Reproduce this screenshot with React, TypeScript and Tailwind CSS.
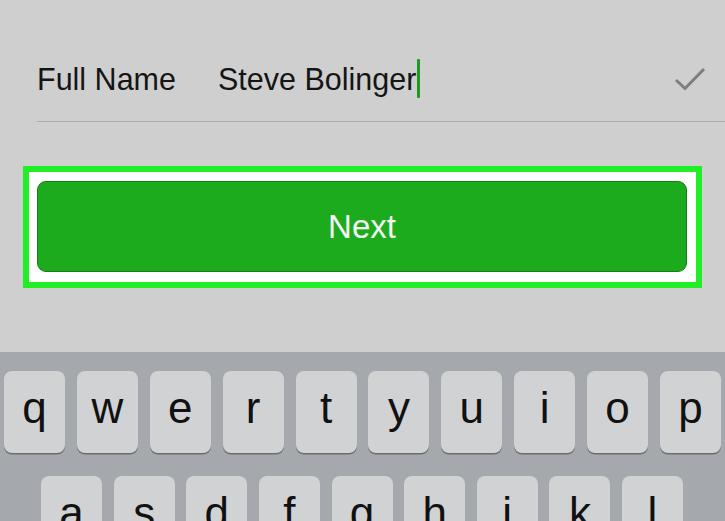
const rowOne = ['q', 'w', 'e', 'r', 't', 'y', 'u', 'i', 'o', 'p'];
const rowTwo = ['a', 's', 'd', 'f', 'g', 'h', 'j', 'k', 'l'];

const Key = ({ letter }: { letter: string }) => (
  <div className="w-[61px] h-[82px] shrink-0 rounded-[8px] bg-[#d1d2d4] shadow-[0_1.5px_0_#6c6d70] flex justify-center pt-[15px] text-[44px] leading-[44px] text-[#111]">
    {letter}
  </div>
);

const App: React.FC = () => {
  return (
    <div className="w-[725px] h-[521px] overflow-hidden flex flex-col font-['Liberation_Sans',Arial,sans-serif]">
      <div className="h-[352px] shrink-0 bg-[#cfcfcf] flex flex-col">
        <div className="ml-[37px] h-[122px] pt-[36px] border-b border-[#acacac] flex items-center text-[30.5px] leading-[30px] text-[#151515]">
          <span className="w-[181px]">Full Name</span>
          <span>Steve Bolinger</span>
          <span className="w-[3px] h-[39px] bg-[#1e9a1e] ml-[1px] rounded-[1px]" />
          <svg
            className="ml-auto mr-[19px]"
            width="32"
            height="24"
            viewBox="0 0 32 24"
            fill="none"
          >
            <polyline
              points="2,13 11,21.5 30,2"
              stroke="#7e7e7e"
              strokeWidth="3"
              strokeLinejoin="miter"
            />
          </svg>
        </div>

        <div className="mx-[23px] mt-[44px] border-[6px] border-[#22ee26] bg-white pl-[8px] pr-[6px] pt-[9px] pb-[10px]">
          <button className="w-[650px] h-[91px] rounded-[9px] bg-[#1cab1c] border border-[#147e14] flex items-center justify-center text-[33px] text-[#f4f4f4]">
            Next
          </button>
        </div>
      </div>

      <div className="flex-1 bg-[#a5a8ad] pt-[19px] flex flex-col gap-[23px]">
        <div className="px-[4px] flex justify-between">
          {rowOne.map((l) => (
            <Key key={l} letter={l} />
          ))}
        </div>
        <div className="pl-[41px] pr-[42px] flex justify-between">
          {rowTwo.map((l) => (
            <Key key={l} letter={l} />
          ))}
        </div>
      </div>
    </div>
  );
};

export default App;
